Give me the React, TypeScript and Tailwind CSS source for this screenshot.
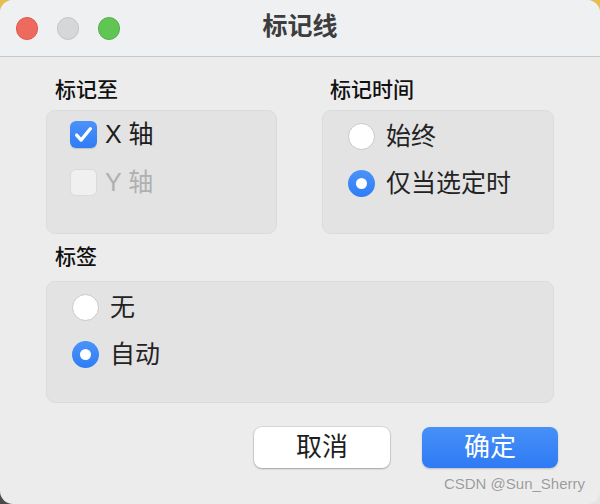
import React from 'react';

const font = { fontFamily: '"Liberation Sans", "Noto Sans CJK SC", sans-serif' };

const Check = ({ checked, disabled }: { checked?: boolean; disabled?: boolean }) =>
  checked ? (
    <div className="w-[27px] h-[27px] rounded-[6px] bg-gradient-to-b from-[#4b93fa] to-[#2f7cf5] flex items-center justify-center shadow-[0_1px_1px_rgba(0,0,0,0.15)]">
      <svg width="21" height="21" viewBox="0 0 20 20" fill="none">
        <path d="M3.5 10.5l4.3 4.8L16.5 4.5" stroke="white" strokeWidth="3.2" strokeLinecap="round" strokeLinejoin="round" />
      </svg>
    </div>
  ) : (
    <div
      className={
        'w-[27px] h-[27px] rounded-[6px] border ' +
        (disabled ? 'bg-[#f0f0f0] border-[#dadada]' : 'bg-white border-[#c8c8c8]')
      }
    />
  );

const Radio = ({ checked }: { checked?: boolean }) =>
  checked ? (
    <div className="w-[27px] h-[27px] rounded-full bg-gradient-to-b from-[#4b93fa] to-[#2f7cf5] flex items-center justify-center">
      <div className="w-[11px] h-[11px] rounded-full bg-white" />
    </div>
  ) : (
    <div className="w-[27px] h-[27px] rounded-full bg-white border border-[#c9c9c9]" />
  );

export default function App() {
  return (
    <div className="w-[600px] h-[504px] grid grid-cols-2 grid-rows-2 relative" style={font}>
      {/* desktop behind the rounded window corners */}
      <div className="bg-[#e4be4f]" />
      <div className="bg-[#e4be4f]" />
      <div className="bg-[#4a4a4a]" />
      <div className="bg-[#e4e4e4]" />

      <div className="absolute inset-0 rounded-[13px] overflow-hidden bg-[#ececec] flex flex-col">
        {/* title bar */}
        <div className="h-[57px] shrink-0 bg-[#eff0f2] border-b border-[#c9c9c9] flex items-center relative">
          <div className="flex items-center gap-[19px] pl-[16px]">
            <div className="w-[22px] h-[23px] rounded-full bg-[#ee6a5e] border border-[#de584e]" />
            <div className="w-[22px] h-[23px] rounded-full bg-[#d6d7d9] border border-[#c5c6c8]" />
            <div className="w-[22px] h-[23px] rounded-full bg-[#60c553] border border-[#52b046]" />
          </div>
          <div className="absolute inset-0 flex items-center justify-center text-[25px] font-bold text-[#3d3d3d] pb-[2px]">
            标记线
          </div>
        </div>

        <div className="flex-1 px-[46px] pt-[19px] relative">
          <div className="flex gap-[45px]">
            <div className="w-[231px]">
              <div className="text-[21px] font-medium text-[#111] pl-[9px] leading-[28px]">标记至</div>
              <div className="mt-[6px] h-[124px] rounded-[9px] bg-[#e3e3e3] border border-[#dbdbdb] pl-[23px] pt-[9px] flex flex-col gap-[20px]">
                <div className="flex items-center gap-[8px] text-[25px] text-[#1c1c1c] leading-[28px]">
                  <Check checked />
                  <span>X 轴</span>
                </div>
                <div className="flex items-center gap-[8px] text-[25px] text-[#b0b0b0] leading-[28px]">
                  <Check disabled />
                  <span>Y 轴</span>
                </div>
              </div>
            </div>
            <div className="w-[232px]">
              <div className="text-[21px] font-medium text-[#111] pl-[8px] leading-[28px]">标记时间</div>
              <div className="mt-[6px] h-[124px] rounded-[9px] bg-[#e3e3e3] border border-[#dbdbdb] pl-[25px] pt-[11px] flex flex-col gap-[19px]">
                <div className="flex items-center gap-[11px] text-[25px] text-[#232323] leading-[28px]">
                  <Radio />
                  <span>始终</span>
                </div>
                <div className="flex items-center gap-[11px] text-[25px] text-[#232323] leading-[28px]">
                  <Radio checked />
                  <span>仅当选定时</span>
                </div>
              </div>
            </div>
          </div>

          <div className="mt-[9px]">
            <div className="text-[21px] font-medium text-[#111] pl-[9px] leading-[28px]">标签</div>
            <div className="mt-[10px] h-[122px] rounded-[9px] bg-[#e3e3e3] border border-[#dbdbdb] pl-[25px] pt-[11px] flex flex-col gap-[19px]">
              <div className="flex items-center gap-[11px] text-[25px] text-[#232323] leading-[28px]">
                <Radio />
                <span>无</span>
              </div>
              <div className="flex items-center gap-[11px] text-[25px] text-[#232323] leading-[28px]">
                <Radio checked />
                <span>自动</span>
              </div>
            </div>
          </div>

          <div className="flex justify-end gap-[32px] mt-[24px] -mr-[4px]">
            <button className="w-[136px] h-[41px] rounded-[8px] bg-white shadow-[0_0_0_1px_rgba(0,0,0,0.08),0_1px_2px_rgba(0,0,0,0.25)] text-[26px] leading-[41px] text-[#1e1e1e]">
              取消
            </button>
            <button className="w-[136px] h-[41px] rounded-[8px] bg-gradient-to-b from-[#4690f8] to-[#2f7af4] shadow-[0_1px_2px_rgba(0,0,0,0.2)] text-[26px] leading-[41px] text-white">
              确定
            </button>
          </div>

          <div className="absolute right-[15px] bottom-[9px] text-[15px] text-[#9a9a9a] [text-shadow:0_0_1px_#ffffff]">
            CSDN @Sun_Sherry
          </div>
        </div>
      </div>
    </div>
  );
}
